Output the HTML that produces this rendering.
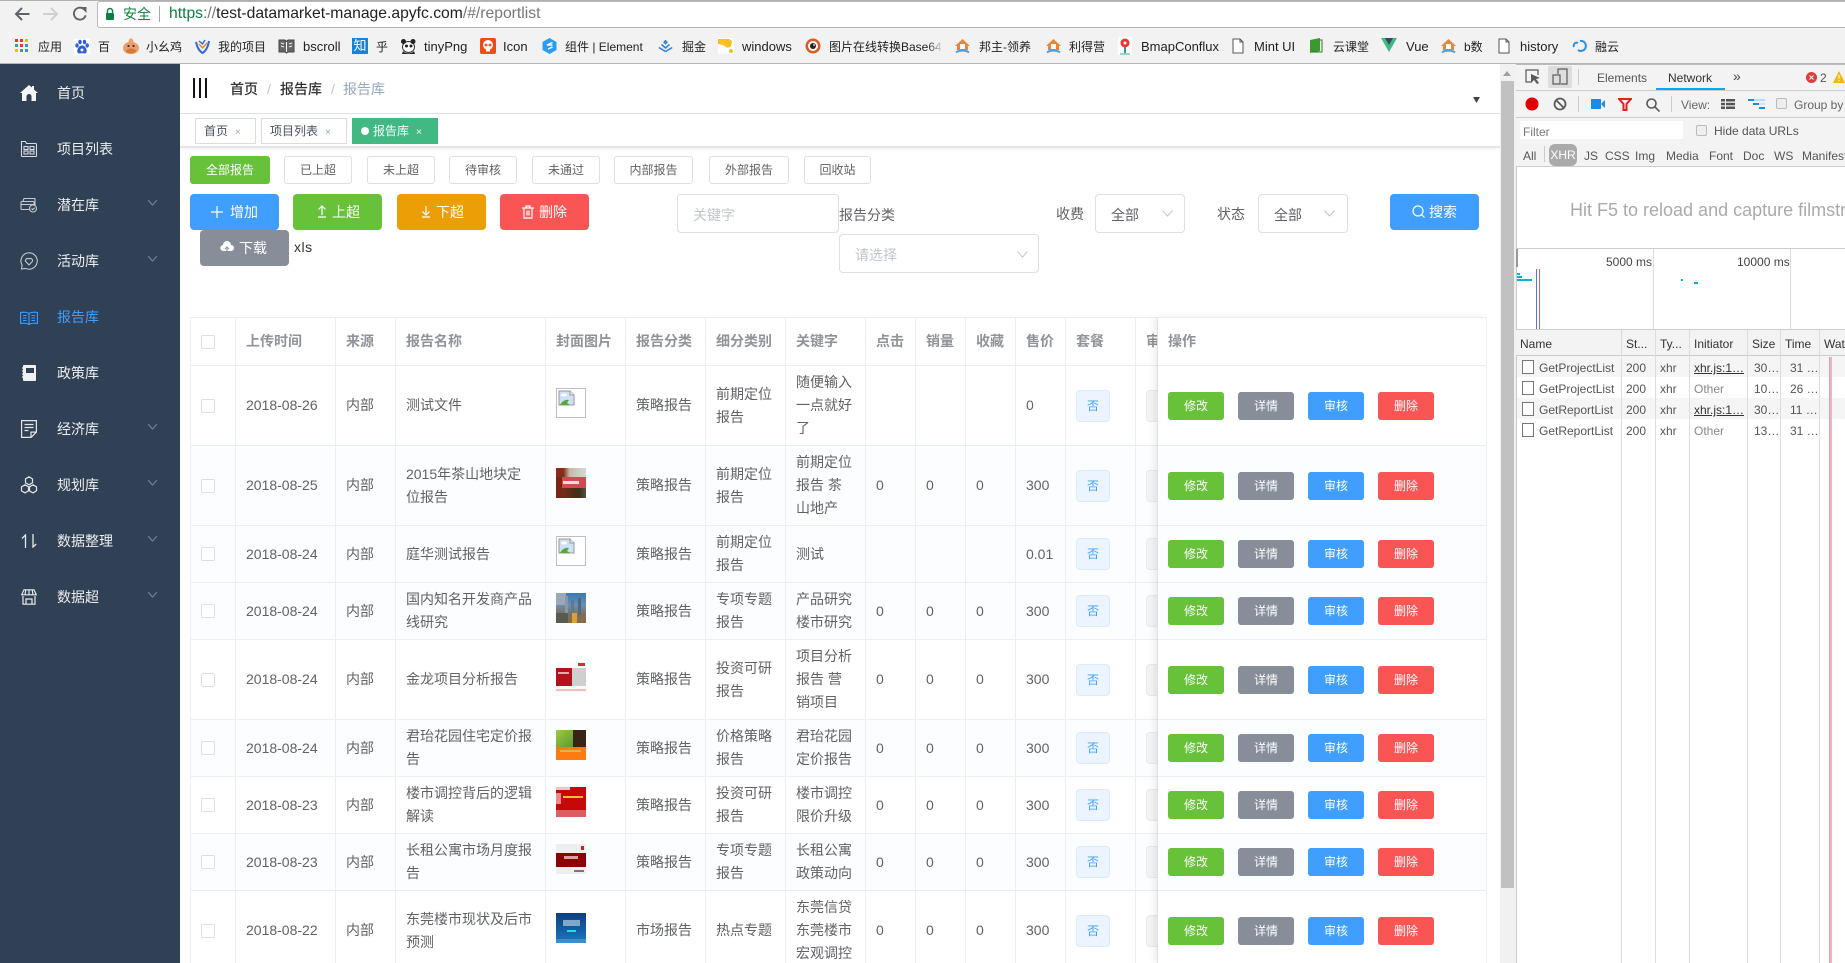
<!DOCTYPE html>
<html><head><meta charset="utf-8"><title>报告库</title>
<style>
*{box-sizing:border-box}
html,body{margin:0;padding:0;width:1845px;height:963px;overflow:hidden;background:#fff;font-family:"Liberation Sans","Noto Sans CJK SC",sans-serif;font-size:14px;color:#606266}
.a{position:absolute;white-space:nowrap}
svg{position:absolute;display:block}
/* chrome */
#top{left:0;top:0;width:1845px;height:64px;background:#f2f2f2;border-top:1px solid #b0b0b0;border-bottom:1px solid #b5b5b5}
.bm{position:absolute;top:39px;line-height:16px;font-size:12px;color:#222;white-space:nowrap}
.bm.lt{font-size:13px}
/* side */
#side{left:0;top:64px;width:180px;height:899px;background:#304055}
.mi{position:absolute;left:57px;font-size:14px;line-height:20px;color:#eceef0;white-space:nowrap}
.ar{position:absolute;left:148px;width:9px;height:9px}
/* tabs */
.tag{position:absolute;top:118px;height:26px;border:1px solid #d8dce5;background:#fff;font-size:12px;line-height:24px;padding-left:8px;color:#495060;white-space:nowrap}
.tag i{font-style:normal;color:#9aa;font-size:10px;margin-left:7px}
.fb{position:absolute;top:156px;height:28px;border:1px solid #dcdfe6;border-radius:3px;background:#fff;font-size:12px;line-height:26px;text-align:center;color:#606266;white-space:nowrap}
.btn{position:absolute;height:36px;border-radius:4px;color:#fff;font-size:14px;line-height:37px;text-align:center;white-space:nowrap}
.inp{position:absolute;border:1px solid #dcdfe6;border-radius:4px;background:#fff;font-size:14px;height:39px;line-height:40px;padding-left:15px;white-space:nowrap}
/* table */
#tw{left:190px;top:317px;width:968px;height:646px;overflow:hidden}
#opw{left:1158px;top:317px;width:329px;height:646px;overflow:hidden;background:#fff;box-shadow:-4px 0 7px rgba(0,0,0,.07)}
table{border-collapse:separate;border-spacing:0;table-layout:fixed;font-size:14px}
td,th{border-right:1px solid #ebeef5;border-bottom:1px solid #ebeef5;padding:0 10px;line-height:23px;vertical-align:middle;text-align:left;white-space:nowrap;overflow:hidden;font-weight:normal}
#t{border-left:1px solid #ebeef5;border-top:1px solid #ebeef5}
#op{border-top:1px solid #ebeef5}
th{color:#909399;font-weight:bold;font-size:14px}
tr.h{height:48px}tr.s{background:#fcfdfe}
.r8{height:80px}.r5{height:57px}
.cb{display:block;width:14px;height:14px;border:1px solid #dcdfe6;border-radius:2px;background:#fff}
.no{display:block;width:34px;height:32px;background:#ecf5ff;border:1px solid #d9ecff;border-radius:4px;color:#409eff;font-size:12px;line-height:30px;text-align:center}
.ng{display:block;width:34px;height:32px;background:#f4f4f5;border:1px solid #e9e9eb;border-radius:4px}
.cv{display:block;position:relative;top:-3px;width:30px;height:30px;overflow:hidden}
.cv b{position:absolute;display:block}
.br{border:1px solid #c0c0c0;background:#fff}
.o{display:inline-block;width:56px;height:28px;line-height:28px;border-radius:3px;color:#fff;font-size:12px;text-align:center;margin-right:14px;vertical-align:middle}
.gr{background:#67c23a}.gy{background:#878d99}.bl{background:#409eff}.rd{background:#fa5555}
/* devtools */
#dv{left:1516px;top:64px;width:329px;height:899px;background:#fff;border-left:1px solid #ccc;font-size:12px;color:#555}
.d{position:absolute;white-space:nowrap;font-size:12px;line-height:14px;color:#555}
.l{position:absolute;background:#ccc}
</style></head><body>

<!-- browser chrome -->
<div class="a" id="top"></div>
<div class="a" style="left:97px;top:1px;width:1748px;height:27px;background:#fff;border:1px solid #b8b8b8;border-right:0;border-radius:3px 0 0 3px"></div>
<svg style="left:12px;top:5px" width="80" height="18" viewBox="0 0 80 18" fill="none">
<path d="M17.500 9H4.500M10 3L4 9l6 6" stroke="#5f6368" stroke-width="2"/>
<path d="M31 9h13M39 3l6 6-6 6" stroke="#cfcfcf" stroke-width="2"/>
<path d="M71.500 3.800a6 6 0 1 0 2.200 6.500" stroke="#5f6368" stroke-width="1.900"/><path d="M68.500 2h6v6z" fill="#5f6368"/>
</svg>
<svg style="left:104px;top:7px" width="12" height="14" viewBox="0 0 12 14"><path d="M3.500 6V4a2.500 2.500 0 0 1 5 0v2" fill="none" stroke="#0b8043" stroke-width="1.400"/><rect x="2" y="6" width="8" height="7" rx="1" fill="#0b8043"/></svg>
<div class="a" style="left:123px;top:5px;font-size:14px;line-height:18px;color:#0b8043">安全</div>
<div class="a" style="left:159px;top:6px;width:1px;height:16px;background:#aaa"></div>
<div class="a" style="left:169px;top:5px;font-size:15.7px;line-height:18px;color:#555"><span style="color:#0b8043">https</span><span style="color:#777">://</span><span style="color:#222">test-datamarket-manage.apyfc.com</span><span style="color:#777">/#/reportlist</span></div>

<!-- bookmarks -->
<svg style="left:15px;top:39px" width="14" height="14" viewBox="0 0 14 14"><rect x="0" y="0" width="3" height="3" fill="#e33"/><rect x="5" y="0" width="3" height="3" fill="#e33"/><rect x="10" y="0" width="3" height="3" fill="#fb0"/><rect x="0" y="5" width="3" height="3" fill="#3a7"/><rect x="5" y="5" width="3" height="3" fill="#e33"/><rect x="10" y="5" width="3" height="3" fill="#48e"/><rect x="0" y="10" width="3" height="3" fill="#fb0"/><rect x="5" y="10" width="3" height="3" fill="#3a7"/><rect x="10" y="10" width="3" height="3" fill="#48e"/></svg>
<span class="bm" style="left:38px">应用</span>
<svg style="left:74px;top:39px" width="16" height="16" viewBox="0 0 16 16"><rect width="16" height="16" fill="#fff"/><g fill="#2a5fd8"><ellipse cx="3" cy="6.500" rx="1.700" ry="2.100"/><ellipse cx="6" cy="3" rx="1.700" ry="2.200"/><ellipse cx="10.500" cy="3" rx="1.700" ry="2.200"/><ellipse cx="13.200" cy="6.500" rx="1.700" ry="2.100"/><path d="M8 6.500c-3 0-5.500 4-4.500 7 1 1.600 3.500.8 4.500.8s3.500.8 4.500-.8c1-3-1.500-7-4.500-7z"/></g><circle cx="8" cy="11" r="1.500" fill="#fff"/></svg>
<span class="bm" style="left:98px">百</span>
<svg style="left:122px;top:38px" width="18" height="17" viewBox="0 0 18 17"><path d="M9 0c1.500 1 2.500 2 2.500 4 3 1 5.500 3 5.500 6 0 4-3.500 6-8 6s-8-2-8-6c0-3 2.500-5 5.500-6C6.500 2 7.500 1 9 0z" fill="#e8a070"/><ellipse cx="9" cy="13" rx="5" ry="2.500" fill="#d87838"/><circle cx="6.500" cy="8" r="1.100" fill="#432"/><circle cx="11.500" cy="8" r="1.100" fill="#432"/></svg>
<span class="bm" style="left:146px">小幺鸡</span>
<svg style="left:195px;top:39px" width="15" height="15" viewBox="0 0 15 15" fill="none"><path d="M1 3c1 5 3 9 6.500 11C11 12 13 8 14 2" stroke="#2a6bd8" stroke-width="2"/><path d="M4 5l3.500 4L12 4" stroke="#e8862a" stroke-width="1.400"/><path d="M4 2l3.500 3L10 1" stroke="#2a6bd8" stroke-width="1.400"/></svg>
<span class="bm" style="left:218px">我的项目</span>
<svg style="left:278px;top:39px" width="17" height="15" viewBox="0 0 17 15"><path d="M1 1h6l1.500 1.500L10 1h6v12h-6l-1.500 1L7 13H1z" fill="#666" stroke="#444"/><path d="M8.500 3v10" stroke="#fff"/><path d="M3 4l3 1M3 7l3 1M14 4l-3 1M14 7l-3 1" stroke="#eee"/></svg>
<span class="bm lt" style="left:303px">bscroll</span>
<div class="a" style="left:352px;top:38px;width:16px;height:16px;background:#0f84e4;color:#fff;font-size:13px;line-height:16px;text-align:center">知</div>
<span class="bm" style="left:376px">乎</span>
<svg style="left:400px;top:38px" width="17" height="16" viewBox="0 0 17 16"><ellipse cx="8.500" cy="9" rx="6" ry="5.500" fill="#fff" stroke="#333"/><circle cx="3.500" cy="3.500" r="2.500" fill="#222"/><circle cx="13" cy="3.500" r="2.500" fill="#222"/><circle cx="6.500" cy="8" r="1.500" fill="#222"/><circle cx="11" cy="8" r="1.500" fill="#222"/><path d="M3 13c2 3 9 3 11 0l1 3H2z" fill="#222"/></svg>
<span class="bm lt" style="left:424px">tinyPng</span>
<div class="a" style="left:480px;top:38px;width:16px;height:16px;background:#f04a1c;border-radius:2px"><svg style="left:2px;top:2px" width="12" height="12" viewBox="0 0 12 12"><circle cx="6" cy="5" r="5" fill="#fff"/><rect x="4" y="8" width="4" height="3.500" fill="#fff"/><circle cx="4" cy="5" r="1.400" fill="#f04a1c"/><circle cx="8" cy="5" r="1.400" fill="#f04a1c"/></svg></div>
<span class="bm lt" style="left:503px">Icon</span>
<svg style="left:542px;top:38px" width="15" height="16" viewBox="0 0 15 16"><path d="M7.500 0l7 4v8l-7 4-7-4V4z" fill="#2d9cf0"/><path d="M10.500 4.500L5 7l5.500 0M10.500 9L6 11" stroke="#fff" stroke-width="1.500" fill="none"/></svg>
<span class="bm" style="left:565px">组件 | Element</span>
<svg style="left:658px;top:40px" width="15" height="12" viewBox="0 0 15 12" fill="none" stroke="#2a80e0" stroke-width="1.500"><path d="M7.500 0.800l1.400 1.400-1.400 1.400-1.400-1.400zM3.500 4.500L7.500 8l4-3.500M.8 7.500l6.700 4 6.700-4"/></svg>
<span class="bm" style="left:682px">掘金</span>
<svg style="left:718px;top:38px" width="16" height="16" viewBox="0 0 16 16"><rect width="16" height="16" fill="#fff"/><path d="M0 1h11l3 2-1 5c-1 2-4 2-5 1L5 7 0 6z" fill="#f8bf1e"/><circle cx="13" cy="13" r="2" fill="#f8bf1e"/></svg>
<span class="bm lt" style="left:742px">windows</span>
<svg style="left:805px;top:38px" width="16" height="16" viewBox="0 0 16 16"><circle cx="8" cy="8" r="7.500" fill="#e05a20"/><circle cx="8" cy="8" r="5" fill="#fff"/><circle cx="8" cy="8" r="3" fill="#222"/><circle cx="9" cy="7" r=".9" fill="#fff"/></svg>
<span class="bm" style="left:829px;width:112px;overflow:hidden;-webkit-mask-image:linear-gradient(90deg,#000 88%,rgba(0,0,0,.15) 100%);mask-image:linear-gradient(90deg,#000 88%,rgba(0,0,0,.15) 100%)">图片在线转换Base64</span>
<svg style="left:954px;top:38px" width="17" height="16" viewBox="0 0 17 16"><path d="M8.500 1L16 8h-2v4H3V8H1z" fill="#e8863a"/><rect x="6" y="6" width="5" height="5" fill="#fff"/><path d="M2 14.500C5 12 12 12 15 14.500" stroke="#4aa0e0" stroke-width="2" fill="none"/></svg>
<span class="bm" style="left:979px">邦主-领养</span>
<svg style="left:1045px;top:38px" width="17" height="16" viewBox="0 0 17 16"><path d="M8.500 1L16 8h-2v4H3V8H1z" fill="#e8863a"/><rect x="6" y="6" width="5" height="5" fill="#fff"/><path d="M2 14.500C5 12 12 12 15 14.500" stroke="#4aa0e0" stroke-width="2" fill="none"/></svg>
<span class="bm" style="left:1069px">利得营</span>
<svg style="left:1118px;top:37px" width="14" height="18" viewBox="0 0 14 18"><rect width="14" height="18" fill="#fff"/><circle cx="7" cy="6" r="4.500" fill="#e33"/><circle cx="7" cy="6" r="1.500" fill="#fff"/><path d="M7 10v6" stroke="#48a" stroke-width="2"/><path d="M2 17h10" stroke="#3a7" stroke-width="1"/></svg>
<span class="bm lt" style="left:1141px">BmapConflux</span>
<svg style="left:1232px;top:38px" width="12" height="16" viewBox="0 0 12 16"><path d="M1 1h7l3 3v11H1z" fill="#fff" stroke="#555"/><path d="M8 1v3h3" fill="none" stroke="#555"/></svg>
<span class="bm lt" style="left:1254px">Mint UI</span>
<svg style="left:1309px;top:37px" width="14" height="17" viewBox="0 0 14 17"><path d="M1 3l10-2v13L1 16z" fill="#3a9a30"/><path d="M11 3h2v12H3" fill="none" stroke="#2a7a20"/></svg>
<span class="bm" style="left:1333px">云课堂</span>
<svg style="left:1381px;top:38px" width="16" height="14" viewBox="0 0 16 14"><path d="M0 0h16L8 14z" fill="#41b883"/><path d="M4 0h8L8 7z" fill="#35495e"/></svg>
<span class="bm lt" style="left:1406px">Vue</span>
<svg style="left:1440px;top:38px" width="17" height="16" viewBox="0 0 17 16"><path d="M8.500 1L16 8h-2v4H3V8H1z" fill="#e8863a"/><rect x="6" y="6" width="5" height="5" fill="#fff"/><path d="M2 14.500C5 12 12 12 15 14.500" stroke="#4aa0e0" stroke-width="2" fill="none"/></svg>
<span class="bm" style="left:1464px">b数</span>
<svg style="left:1498px;top:38px" width="12" height="16" viewBox="0 0 12 16"><path d="M1 1h7l3 3v11H1z" fill="#fff" stroke="#555"/><path d="M8 1v3h3" fill="none" stroke="#555"/></svg>
<span class="bm lt" style="left:1520px">history</span>
<svg style="left:1572px;top:39px" width="16" height="14" viewBox="0 0 16 14" fill="none"><path d="M8 2a5 5 0 1 1-2 9" stroke="#2a90e0" stroke-width="2"/><path d="M6 4a3 3 0 0 0-4 4" stroke="#2a90e0" stroke-width="2"/></svg>
<span class="bm" style="left:1595px">融云</span>

<!-- sidebar -->
<div class="a" id="side"></div>
<svg style="left:20px;top:85px" width="18" height="16" viewBox="0 0 18 16"><path d="M9 0L0 8h2v8h14V8h2L14 4.500V1h-2v1.500z" fill="#f4f5f6"/><path d="M6.500 16v-4.500a2.500 2.500 0 0 1 5 0V16z" fill="#304055"/></svg>
<svg style="left:20px;top:140px" width="18" height="18" viewBox="0 0 18 18" fill="none" stroke="#d8dbe0" stroke-width="1.100"><path d="M1.500 3.500V1.500h4l1 2h9a1 1 0 0 1 1 1v11a1 1 0 0 1-1 1h-13a1 1 0 0 1-1-1z"/><rect x="4" y="6.500" width="4" height="3"/><rect x="10" y="6.500" width="4" height="3"/><rect x="4" y="11" width="4" height="3"/><rect x="10" y="11" width="4" height="3"/></svg>
<svg style="left:20px;top:197px" width="18" height="16" viewBox="0 0 18 16" fill="none" stroke="#c4c9d0" stroke-width="1.100"><path d="M3 4l1-2.500h11V9"/><rect x="1" y="4.500" width="13" height="8" rx="1"/><path d="M1 7.500h13"/><circle cx="13" cy="11.500" r="3.500" fill="#304055"/><path d="M11.500 11.500l1.200 1.200 2-2"/></svg>
<svg style="left:20px;top:252px" width="18" height="18" viewBox="0 0 18 18" fill="none" stroke="#c4c9d0" stroke-width="1.100"><path d="M9 .8a8.200 8.200 0 1 1 -3.500 15.600L1.500 17l.6-3.800A8.200 8.200 0 0 1 9 .8z"/><path d="M9 13L5.500 9.200A2.300 2.300 0 0 1 9 6.800a2.300 2.300 0 0 1 3.500 2.400z"/></svg>
<svg style="left:20px;top:311px" width="18" height="14" viewBox="0 0 18 14" fill="none" stroke="#409eff" stroke-width="1.100"><path d="M9 2.500C7 1 3 1 .6 1.500v11C3 12 7 12 9 13.500 11 12 15 12 17.400 12.500v-11C15 1 11 1 9 2.500zM9 2.500v11"/><path d="M3 4.500h3.500M3 7h3.500M3 9.500h3.500M11.500 4.500H15M11.500 7H15M11.500 9.500H15"/></svg>
<svg style="left:21px;top:365px" width="16" height="17" viewBox="0 0 16 17"><rect x="2" y="0" width="13" height="16" rx="1" fill="#f0f1f3"/><rect x="5" y="3" width="8" height="5" fill="#304055"/><path d="M1 3h3M1 6h3M1 9h3M1 12h3" stroke="#f0f1f3" stroke-width="1.300"/></svg>
<svg style="left:21px;top:420px" width="16" height="18" viewBox="0 0 16 18" fill="none" stroke="#e4e6e9" stroke-width="1.200"><path d="M.6.6h14.800v11.500l-5.300 5.300H.6z"/><path d="M10 17.400v-5.300h5.400M3.500 4.500h9M3.500 7.500h9M3.500 10.500h4"/></svg>
<svg style="left:20px;top:476px" width="18" height="18" viewBox="0 0 18 18" fill="none" stroke="#e4e6e9" stroke-width="1.200"><path d="M9 .8l3.500 2v4L9 8.800l-3.500-2v-4zM5 8.800l3.500 2v4L5 16.900l-3.500-2v-4zM13 8.800l3.500 2v4L13 16.900l-3.500-2v-4z"/></svg>
<svg style="left:21px;top:534px" width="16" height="14" viewBox="0 0 16 14" fill="none" stroke="#e6e8ea" stroke-width="1.300"><path d="M4.500 14V1L1 4.500M12 0v13l3.200-3"/></svg>
<svg style="left:21px;top:589px" width="16" height="16" viewBox="0 0 16 16" fill="none" stroke="#e8eaec" stroke-width="1.200"><path d="M3 .8h10l2.300 5H.7zM.7 5.800h14.600M4 5.800l.8-5M8 5.800V.8M12 5.800l-.8-5M2 7v8.200h12V7M5 15V10h6v5"/></svg>

<span class="mi" style="top:83px">首页</span>
<span class="mi" style="top:139px">项目列表</span>
<span class="mi" style="top:195px">潜在库</span>
<span class="mi" style="top:251px">活动库</span>
<span class="mi" style="top:307px;color:#409eff">报告库</span>
<span class="mi" style="top:363px">政策库</span>
<span class="mi" style="top:419px">经济库</span>
<span class="mi" style="top:475px">规划库</span>
<span class="mi" style="top:531px">数据整理</span>
<span class="mi" style="top:587px">数据超</span>
<svg class="ar" style="top:198px" viewBox="0 0 9 9"><path d="M0 2l4.500 5L9 2" fill="none" stroke="#7b8797"/></svg>
<svg class="ar" style="top:254px" viewBox="0 0 9 9"><path d="M0 2l4.500 5L9 2" fill="none" stroke="#7b8797"/></svg>
<svg class="ar" style="top:422px" viewBox="0 0 9 9"><path d="M0 2l4.500 5L9 2" fill="none" stroke="#7b8797"/></svg>
<svg class="ar" style="top:478px" viewBox="0 0 9 9"><path d="M0 2l4.500 5L9 2" fill="none" stroke="#7b8797"/></svg>
<svg class="ar" style="top:534px" viewBox="0 0 9 9"><path d="M0 2l4.500 5L9 2" fill="none" stroke="#7b8797"/></svg>
<svg class="ar" style="top:590px" viewBox="0 0 9 9"><path d="M0 2l4.500 5L9 2" fill="none" stroke="#7b8797"/></svg>

<!-- header -->
<svg style="left:193px;top:78px" width="15" height="20" viewBox="0 0 15 20"><path d="M1 0v20M7 0v20M13 0v20" stroke="#111" stroke-width="2"/></svg>
<div class="a" style="left:230px;top:79px;line-height:20px;font-size:14px;color:#303133;font-weight:500">首页</div>
<div class="a" style="left:267px;top:79px;line-height:20px;color:#c0c4cc">/</div>
<div class="a" style="left:280px;top:79px;line-height:20px;font-size:14px;color:#303133;font-weight:500">报告库</div>
<div class="a" style="left:331px;top:79px;line-height:20px;color:#c0c4cc">/</div>
<div class="a" style="left:343px;top:79px;line-height:20px;color:#97a8be">报告库</div>
<svg style="left:1473px;top:97px" width="7" height="6" viewBox="0 0 7 6"><path d="M0 0h7L3.500 6z" fill="#444"/></svg>
<div class="a" style="left:180px;top:113px;width:1320px;height:1px;background:#dfe1e6"></div>
<div class="a" style="left:180px;top:146px;width:1320px;height:2px;background:#e4e5e8;box-shadow:0 1px 3px rgba(0,0,0,.08)"></div>

<div class="tag" style="left:195px;width:61px">首页<i>×</i></div>
<div class="tag" style="left:261px;width:86px">项目列表<i>×</i></div>
<div class="tag" style="left:352px;width:86px;background:#42b983;border-color:#42b983;color:#fff"><span style="display:inline-block;width:8px;height:8px;border-radius:50%;background:#fff;margin-right:4px"></span>报告库<i style="color:#fff">×</i></div>

<div class="fb" style="left:190px;width:80px;background:#67c23a;border-color:#67c23a;color:#fff">全部报告</div>
<div class="fb" style="left:284px;width:68px">已上超</div>
<div class="fb" style="left:367px;width:68px">未上超</div>
<div class="fb" style="left:449px;width:68px">待审核</div>
<div class="fb" style="left:532px;width:68px">未通过</div>
<div class="fb" style="left:614px;width:79px">内部报告</div>
<div class="fb" style="left:709px;width:80px">外部报告</div>
<div class="fb" style="left:804px;width:67px">回收站</div>

<div class="btn" style="left:190px;top:194px;width:89px;background:#409eff"><svg style="left:21px;top:12px" width="12" height="12" viewBox="0 0 12 12"><path d="M6 0v12M0 6h12" stroke="#fff" stroke-width="1.200"/></svg><span style="padding-left:19px">增加</span></div>
<div class="btn" style="left:293px;top:194px;width:89px;background:#67c23a"><svg style="left:24px;top:11px" width="10" height="13" viewBox="0 0 10 13" fill="none" stroke="#fff" stroke-width="1.200"><path d="M5 10V1M1.500 4.500L5 1l3.500 3.500M1 12h8"/></svg><span style="padding-left:17px">上超</span></div>
<div class="btn" style="left:397px;top:194px;width:89px;background:#eb9e05"><svg style="left:24px;top:11px" width="10" height="13" viewBox="0 0 10 13" fill="none" stroke="#fff" stroke-width="1.200"><path d="M5 1v9M1.500 6.500L5 10l3.500-3.500M1 12h8"/></svg><span style="padding-left:17px">下超</span></div>
<div class="btn" style="left:500px;top:194px;width:89px;background:#fa5555"><svg style="left:22px;top:11px" width="12" height="14" viewBox="0 0 12 14" fill="none" stroke="#fff" stroke-width="1.200"><path d="M0 3h12M4 3V1h4v2M2 3v10h8V3M5 5.500v5M7 5.500v5"/></svg><span style="padding-left:17px">删除</span></div>
<div class="btn" style="left:200px;top:230px;width:89px;height:36px;background:#878d99"><svg style="left:20px;top:11px" width="14" height="13" viewBox="0 0 14 13"><path d="M3.500 10a3 3 0 0 1-.5-6 4 4 0 0 1 8 0 3 3 0 0 1 0 6z" fill="#fff"/><path d="M7 12V6M5 8l2-2 2 2" stroke="#878d99" fill="none"/></svg><span style="padding-left:17px">下载</span></div>
<div class="a" style="left:294px;top:237px;font-size:14px;line-height:20px;color:#333;letter-spacing:.5px">xls</div>

<div class="inp" style="left:677px;top:194px;width:162px;color:#c0c4cc">关键字</div>
<div class="a" style="left:839px;top:205px;line-height:20px;font-size:14px;color:#606266">报告分类</div>
<div class="inp" style="left:839px;top:234px;width:200px;color:#c0c4cc">请选择</div>
<svg style="left:1017px;top:251px" width="11" height="7" viewBox="0 0 11 7"><path d="M.5.500l5 5.500 5-5.500" fill="none" stroke="#c0c4cc"/></svg>
<div class="a" style="left:1056px;top:204px;line-height:20px;color:#606266">收费</div>
<div class="inp" style="left:1095px;top:194px;width:90px;color:#606266">全部</div>
<svg style="left:1162px;top:210px" width="11" height="7" viewBox="0 0 11 7"><path d="M.5.500l5 5.500 5-5.500" fill="none" stroke="#c0c4cc"/></svg>
<div class="a" style="left:1217px;top:204px;line-height:20px;color:#606266">状态</div>
<div class="inp" style="left:1258px;top:194px;width:90px;color:#606266">全部</div>
<svg style="left:1324px;top:210px" width="11" height="7" viewBox="0 0 11 7"><path d="M.5.500l5 5.500 5-5.500" fill="none" stroke="#c0c4cc"/></svg>
<div class="btn" style="left:1390px;top:194px;width:89px;background:#409eff"><svg style="left:22px;top:11px" width="13" height="14" viewBox="0 0 13 14" fill="none" stroke="#fff" stroke-width="1.200"><circle cx="6" cy="6" r="5"/><path d="M9.500 9.500l3 3"/></svg><span style="padding-left:17px">搜索</span></div>

<!-- table -->
<div class="a" id="tw">
<table id="t" style="width:968px">
<colgroup><col style="width:45px"><col style="width:100px"><col style="width:60px"><col style="width:150px"><col style="width:80px"><col style="width:80px"><col style="width:80px"><col style="width:80px"><col style="width:50px"><col style="width:50px"><col style="width:50px"><col style="width:50px"><col style="width:70px"><col style="width:22px"></colgroup>
<tr class="h"><th><span class="cb"></span></th><th>上传时间</th><th>来源</th><th>报告名称</th><th>封面图片</th><th>报告分类</th><th>细分类别</th><th>关键字</th><th>点击</th><th>销量</th><th>收藏</th><th>售价</th><th>套餐</th><th>审核</th></tr>
<tr class="r8"><td><span class="cb"></span></td><td>2018-08-26</td><td>内部</td><td>测试文件</td><td><span class="cv br"><svg style="left:1px;top:1px" width="17" height="16" viewBox="0 0 17 16"><path d="M1 1h11l4 4v10H1z" fill="#cfe0f8" stroke="#999"/><path d="M12 1v4h4" fill="#eee" stroke="#999"/><ellipse cx="6" cy="5" rx="3" ry="1.500" fill="#fff"/><path d="M2 15c2-4 6-6 9-5l-2 3 3 2z" fill="#55a83a"/></svg></span></td><td>策略报告</td><td>前期定位<br>报告</td><td>随便输入<br>一点就好<br>了</td><td></td><td></td><td></td><td>0</td><td><span class="no">否</span></td><td><span class="ng"></span></td></tr>
<tr class="r8 s"><td><span class="cb"></span></td><td>2018-08-25</td><td>内部</td><td>2015年茶山地块定<br>位报告</td><td><span class="cv" style="background:#8a3a20"><b style="left:0;top:0;width:30px;height:9px;background:linear-gradient(90deg,#8a2a18 0,#8a2a18 25%,#c8b8a8 45%,#d8d8d8 100%)"></b><b style="left:6px;top:9px;width:24px;height:11px;background:#d04a50"></b><b style="left:7px;top:13px;width:16px;height:3px;background:#f3dcdc"></b><b style="left:0;top:9px;width:6px;height:21px;background:#7a2414"></b><b style="left:6px;top:20px;width:24px;height:10px;background:linear-gradient(90deg,#7a2a18,#3a3018 70%,#55503a)"></b></span></td><td>策略报告</td><td>前期定位<br>报告</td><td>前期定位<br>报告 茶<br>山地产</td><td>0</td><td>0</td><td>0</td><td>300</td><td><span class="no">否</span></td><td><span class="ng"></span></td></tr>
<tr class="r5 s"><td><span class="cb"></span></td><td>2018-08-24</td><td>内部</td><td>庭华测试报告</td><td><span class="cv br"><svg style="left:1px;top:1px" width="17" height="16" viewBox="0 0 17 16"><path d="M1 1h11l4 4v10H1z" fill="#cfe0f8" stroke="#999"/><path d="M12 1v4h4" fill="#eee" stroke="#999"/><ellipse cx="6" cy="5" rx="3" ry="1.500" fill="#fff"/><path d="M2 15c2-4 6-6 9-5l-2 3 3 2z" fill="#55a83a"/></svg></span></td><td>策略报告</td><td>前期定位<br>报告</td><td>测试</td><td></td><td></td><td></td><td>0.01</td><td><span class="no">否</span></td><td><span class="ng"></span></td></tr>
<tr class="r5 s"><td><span class="cb"></span></td><td>2018-08-24</td><td>内部</td><td>国内知名开发商产品<br>线研究</td><td><span class="cv" style="background:linear-gradient(180deg,#3a78b0 0,#6a90b0 40%,#7a7060 70%,#8a6a40 100%)"><b style="left:0;top:0;width:10px;height:12px;background:#9aa8b8"></b><b style="left:9px;top:3px;width:3px;height:22px;background:#8898a8"></b><b style="left:15px;top:7px;width:3px;height:17px;background:#5a7a98"></b><b style="left:22px;top:5px;width:3px;height:17px;background:#4a6a88"></b><b style="left:16px;top:20px;width:5px;height:10px;background:#e0a030"></b><b style="left:0;top:20px;width:12px;height:10px;background:#5a5a50"></b></span></td><td>策略报告</td><td>专项专题<br>报告</td><td>产品研究<br>楼市研究</td><td>0</td><td>0</td><td>0</td><td>300</td><td><span class="no">否</span></td><td><span class="ng"></span></td></tr>
<tr class="r8"><td><span class="cb"></span></td><td>2018-08-24</td><td>内部</td><td>金龙项目分析报告</td><td><span class="cv" style="background:#fafafa"><b style="left:0;top:6px;width:16px;height:18px;background:#b5101c"></b><b style="left:16px;top:6px;width:14px;height:18px;background:#cfcfcf"></b><b style="left:22px;top:1px;width:7px;height:3px;background:#c33"></b><b style="left:0;top:27px;width:30px;height:2px;background:#f6bcbc"></b><b style="left:2px;top:10px;width:11px;height:2px;background:#e8a8a8"></b></span></td><td>策略报告</td><td>投资可研<br>报告</td><td>项目分析<br>报告 营<br>销项目</td><td>0</td><td>0</td><td>0</td><td>300</td><td><span class="no">否</span></td><td><span class="ng"></span></td></tr>
<tr class="r5 s"><td><span class="cb"></span></td><td>2018-08-24</td><td>内部</td><td>君珆花园住宅定价报<br>告</td><td><span class="cv" style="background:#ff7a10"><b style="left:0;top:0;width:17px;height:17px;background:linear-gradient(135deg,#a0c848,#5a9a30)"></b><b style="left:17px;top:0;width:13px;height:17px;background:#3a2418"></b><b style="left:4px;top:20px;width:21px;height:2px;background:#f0b040"></b></span></td><td>策略报告</td><td>价格策略<br>报告</td><td>君珆花园<br>定价报告</td><td>0</td><td>0</td><td>0</td><td>300</td><td><span class="no">否</span></td><td><span class="ng"></span></td></tr>
<tr class="r5"><td><span class="cb"></span></td><td>2018-08-23</td><td>内部</td><td>楼市调控背后的逻辑<br>解读</td><td><span class="cv" style="background:#c80808"><b style="left:0;top:0;width:14px;height:3px;background:#e8c8c8"></b><b style="left:0;top:6px;width:5px;height:11px;background:#e88a8a"></b><b style="left:7px;top:9px;width:20px;height:2px;background:#ecc030"></b><b style="left:0;top:23px;width:30px;height:7px;background:#d86060"></b></span></td><td>策略报告</td><td>投资可研<br>报告</td><td>楼市调控<br>限价升级</td><td>0</td><td>0</td><td>0</td><td>300</td><td><span class="no">否</span></td><td><span class="ng"></span></td></tr>
<tr class="r5 s"><td><span class="cb"></span></td><td>2018-08-23</td><td>内部</td><td>长租公寓市场月度报<br>告</td><td><span class="cv" style="background:#eee"><b style="left:0;top:9px;width:30px;height:14px;background:#8c0505"></b><b style="left:25px;top:2px;width:3px;height:4px;background:#c22"></b><b style="left:8px;top:12px;width:14px;height:3px;background:#d8a0a0"></b><b style="left:18px;top:26px;width:10px;height:2px;background:#777"></b></span></td><td>策略报告</td><td>专项专题<br>报告</td><td>长租公寓<br>政策动向</td><td>0</td><td>0</td><td>0</td><td>300</td><td><span class="no">否</span></td><td><span class="ng"></span></td></tr>
<tr class="r8"><td><span class="cb"></span></td><td>2018-08-22</td><td>内部</td><td>东莞楼市现状及后市<br>预测</td><td><span class="cv" style="background:linear-gradient(180deg,#0d3f80,#1a78c0)"><b style="left:7px;top:7px;width:17px;height:6px;background:#7fa8c8"></b><b style="left:11px;top:17px;width:9px;height:2px;background:#2dd"></b><b style="left:0;top:26px;width:30px;height:4px;background:#3a8ed0"></b></span></td><td>市场报告</td><td>热点专题</td><td>东莞信贷<br>东莞楼市<br>宏观调控</td><td>0</td><td>0</td><td>0</td><td>300</td><td><span class="no">否</span></td><td><span class="ng"></span></td></tr>
</table>
</div>

<div class="a" id="opw">
<table id="op" style="width:329px">
<tr class="h"><th>操作</th></tr>
<tr class="r8"><td><span class="o gr">修改</span><span class="o gy">详情</span><span class="o bl">审核</span><span class="o rd">删除</span></td></tr>
<tr class="r8 s"><td><span class="o gr">修改</span><span class="o gy">详情</span><span class="o bl">审核</span><span class="o rd">删除</span></td></tr>
<tr class="r5 s"><td><span class="o gr">修改</span><span class="o gy">详情</span><span class="o bl">审核</span><span class="o rd">删除</span></td></tr>
<tr class="r5 s"><td><span class="o gr">修改</span><span class="o gy">详情</span><span class="o bl">审核</span><span class="o rd">删除</span></td></tr>
<tr class="r8"><td><span class="o gr">修改</span><span class="o gy">详情</span><span class="o bl">审核</span><span class="o rd">删除</span></td></tr>
<tr class="r5 s"><td><span class="o gr">修改</span><span class="o gy">详情</span><span class="o bl">审核</span><span class="o rd">删除</span></td></tr>
<tr class="r5"><td><span class="o gr">修改</span><span class="o gy">详情</span><span class="o bl">审核</span><span class="o rd">删除</span></td></tr>
<tr class="r5 s"><td><span class="o gr">修改</span><span class="o gy">详情</span><span class="o bl">审核</span><span class="o rd">删除</span></td></tr>
<tr class="r8"><td><span class="o gr">修改</span><span class="o gy">详情</span><span class="o bl">审核</span><span class="o rd">删除</span></td></tr>
</table>
</div>

<!-- page scrollbar -->
<div class="a" style="left:1500px;top:64px;width:16px;height:899px;background:#f1f1f1"></div>
<div class="a" style="left:1501px;top:81px;width:13px;height:807px;background:#c1c1c1"></div>
<svg style="left:1503px;top:71px" width="8" height="5" viewBox="0 0 8 5"><path d="M4 0l4 5H0z" fill="#a0a0a0"/></svg>

<!-- devtools -->
<div class="a" id="dv"></div>
<div class="a" style="left:1516px;top:64px;width:329px;height:53px;background:#f3f3f3"></div>
<div class="l" style="left:1516px;top:64px;width:329px;height:1px;background:#bbb"></div>
<div class="l" style="left:1516px;top:90px;width:329px;height:1px"></div>
<div class="l" style="left:1516px;top:117px;width:329px;height:1px"></div>
<div class="a" style="left:1516px;top:118px;width:329px;height:49px;background:#f3f3f3;border-bottom:1px solid #ccc"></div>
<div class="a" style="left:1548px;top:66px;width:24px;height:22px;background:#ddd;border-radius:2px"></div>
<svg style="left:1525px;top:68px" width="16" height="17" viewBox="0 0 16 17" fill="none"><path d="M6 14H1V2h12v5" stroke="#5a5a5a" stroke-width="1.200"/><path d="M6 6l9 4-4 1 3 4-2 1-3-4-3 3z" fill="#5a5a5a"/></svg>
<svg style="left:1552px;top:68px" width="16" height="18" viewBox="0 0 16 18" fill="none" stroke="#5a5a5a" stroke-width="1.200"><path d="M6 6V1h9v15h-6"/><rect x="1" y="7" width="7" height="9"/></svg>
<div class="l" style="left:1578px;top:69px;width:1px;height:16px"></div>
<span class="d" style="left:1597px;top:71px">Elements</span>
<span class="d" style="left:1668px;top:71px;color:#333">Network</span>
<div class="l" style="left:1656px;top:88px;width:69px;height:2px;background:#03a9f4"></div>
<span class="d" style="left:1733px;top:69px;font-size:14px;color:#444">»</span>
<svg style="left:1806px;top:72px" width="11" height="11" viewBox="0 0 11 11"><circle cx="5.500" cy="5.500" r="5.500" fill="#e03a3a"/><path d="M3.500 3.500l4 4M7.500 3.500l-4 4" stroke="#fff"/></svg>
<span class="d" style="left:1820px;top:71px">2</span>
<svg style="left:1833px;top:71px" width="12" height="12" viewBox="0 0 12 12"><path d="M6 0l6 12H0z" fill="#f2b611"/><path d="M6 4v4M6 9v1.500" stroke="#fff"/></svg>

<svg style="left:1525px;top:97px" width="14" height="14" viewBox="0 0 14 14"><circle cx="7" cy="7" r="6.500" fill="#e00000"/></svg>
<svg style="left:1553px;top:97px" width="14" height="14" viewBox="0 0 14 14" fill="none" stroke="#5a5a5a" stroke-width="1.800"><circle cx="7" cy="7" r="5.500"/><path d="M3 3l8 8"/></svg>
<div class="l" style="left:1578px;top:96px;width:1px;height:16px"></div>
<svg style="left:1591px;top:99px" width="14" height="10" viewBox="0 0 14 10"><rect width="10" height="10" fill="#1a8ce8"/><path d="M10 5l4-4v8z" fill="#1a8ce8"/></svg>
<svg style="left:1618px;top:98px" width="14" height="13" viewBox="0 0 14 13" fill="none" stroke="#e0201c" stroke-width="2"><path d="M1 1h12L8.500 6v6h-3V6z"/></svg>
<svg style="left:1646px;top:98px" width="14" height="14" viewBox="0 0 14 14" fill="none" stroke="#5a5a5a" stroke-width="1.600"><circle cx="5.500" cy="5.500" r="4.500"/><path d="M9 9l4.500 4.500"/></svg>
<div class="l" style="left:1671px;top:96px;width:1px;height:16px"></div>
<span class="d" style="left:1681px;top:98px;color:#666">View:</span>
<svg style="left:1721px;top:99px" width="14" height="10" viewBox="0 0 14 10" fill="#555"><rect width="4" height="2.500"/><rect x="5" width="9" height="2.500"/><rect y="3.800" width="4" height="2.500"/><rect x="5" y="3.800" width="9" height="2.500"/><rect y="7.500" width="4" height="2.500"/><rect x="5" y="7.500" width="9" height="2.500"/></svg>
<svg style="left:1748px;top:99px" width="17" height="11" viewBox="0 0 17 11"><rect width="17" height="2" fill="#b5dcf5"/><rect x="0" y="0" width="6" height="2" fill="#1a8ce8"/><rect x="5" y="4" width="12" height="2" fill="#b5dcf5" opacity=".6"/><rect x="5" y="4" width="6" height="2" fill="#1a8ce8"/><rect x="11" y="8" width="6" height="2" fill="#1a8ce8"/></svg>
<div class="a" style="left:1776px;top:98px;width:11px;height:11px;background:#eee;border:1px solid #bbb;border-radius:2px"></div>
<span class="d" style="left:1794px;top:98px;color:#666">Group by frame</span>

<div class="a" style="left:1520px;top:121px;width:163px;height:18px;background:#fff;padding-left:3px;font-size:12px;line-height:22px;color:#777">Filter</div>
<div class="a" style="left:1696px;top:125px;width:11px;height:11px;background:#eee;border:1px solid #bbb;border-radius:2px"></div>
<span class="d" style="left:1714px;top:124px">Hide data URLs</span>
<span class="d" style="left:1523px;top:149px">All</span>
<div class="l" style="left:1544px;top:146px;width:1px;height:16px"></div>
<div class="a" style="left:1549px;top:144px;width:28px;height:22px;background:#aaa;border-radius:6px;color:#fff;font-size:12px;line-height:23px;text-align:center">XHR</div>
<span class="d" style="left:1584px;top:149px">JS</span>
<span class="d" style="left:1605px;top:149px">CSS</span>
<span class="d" style="left:1635px;top:149px">Img</span>
<span class="d" style="left:1666px;top:149px">Media</span>
<span class="d" style="left:1709px;top:149px">Font</span>
<span class="d" style="left:1743px;top:149px">Doc</span>
<span class="d" style="left:1774px;top:149px">WS</span>
<span class="d" style="left:1802px;top:149px">Manifest</span>

<div class="a" style="left:1570px;top:198px;width:275px;overflow:hidden;font-size:18px;line-height:24px;color:#aaa">Hit F5 to reload and capture filmstrip.</div>
<div class="l" style="left:1516px;top:248px;width:329px;height:1px"></div>
<div class="l" style="left:1516px;top:249px;width:2px;height:18px;background:#999"></div>
<div class="l" style="left:1653px;top:249px;width:1px;height:80px;background:#ddd"></div>
<div class="l" style="left:1790px;top:249px;width:1px;height:80px;background:#ddd"></div>
<span class="d" style="left:1606px;top:255px;color:#444">5000 ms</span>
<span class="d" style="left:1737px;top:255px;color:#444">10000 ms</span>
<div class="l" style="left:1517px;top:273px;width:3px;height:2px;background:#00b4d8"></div>
<div class="l" style="left:1517px;top:276px;width:5px;height:2px;background:#00b4d8"></div>
<div class="l" style="left:1517px;top:279px;width:15px;height:2px;background:#00b4d8"></div>
<div class="l" style="left:1681px;top:279px;width:2px;height:2px;background:#00b4d8"></div>
<div class="l" style="left:1694px;top:282px;width:4px;height:2px;background:#00b4d8"></div>
<div class="l" style="left:1536px;top:269px;width:1px;height:60px;background:#6a6ae0"></div>
<div class="l" style="left:1539px;top:269px;width:1px;height:60px;background:#e05a5a"></div>
<div class="l" style="left:1516px;top:329px;width:329px;height:1px"></div>
<div class="a" style="left:1516px;top:330px;width:329px;height:26px;background:#f3f3f3;border-bottom:1px solid #ccc"></div>
<div class="a" style="left:1517px;top:356px;width:328px;height:21px;background:#f5f5f5"></div>
<div class="a" style="left:1517px;top:398px;width:328px;height:21px;background:#f5f5f5"></div>
<div class="l" style="left:1621px;top:330px;width:1px;height:633px;background:#ddd"></div>
<div class="l" style="left:1655px;top:330px;width:1px;height:633px;background:#ddd"></div>
<div class="l" style="left:1689px;top:330px;width:1px;height:633px;background:#ddd"></div>
<div class="l" style="left:1747px;top:330px;width:1px;height:633px;background:#ddd"></div>
<div class="l" style="left:1780px;top:330px;width:1px;height:633px;background:#ddd"></div>
<div class="l" style="left:1819px;top:330px;width:1px;height:633px;background:#ddd"></div>
<div class="l" style="left:1829px;top:357px;width:1px;height:606px;background:#b0a8ee"></div>
<div class="l" style="left:1830px;top:357px;width:2px;height:606px;background:#f3b3bb"></div>
<span class="d" style="left:1520px;top:337px;color:#333">Name</span><span class="d" style="left:1626px;top:337px;color:#333">St...</span><span class="d" style="left:1660px;top:337px;color:#333">Ty...</span><span class="d" style="left:1694px;top:337px;color:#333">Initiator</span><span class="d" style="left:1752px;top:337px;color:#333">Size</span><span class="d" style="left:1785px;top:337px;color:#333">Time</span><span class="d" style="left:1824px;top:337px;color:#333">Wat</span>

<div class="a" style="left:1522px;top:360px;width:12px;height:14px;background:#fff;border:1px solid #777"></div>
<span class="d" style="left:1539px;top:361px">GetProjectList</span><span class="d" style="left:1626px;top:361px">200</span><span class="d" style="left:1660px;top:361px">xhr</span><span class="d" style="left:1694px;top:361px;color:#333;text-decoration:underline">xhr.js:1…</span><span class="d" style="left:1754px;top:361px">30…</span><span class="d" style="left:1790px;top:361px">31 …</span>
<div class="a" style="left:1522px;top:381px;width:12px;height:14px;background:#fff;border:1px solid #777"></div>
<span class="d" style="left:1539px;top:382px">GetProjectList</span><span class="d" style="left:1626px;top:382px">200</span><span class="d" style="left:1660px;top:382px">xhr</span><span class="d" style="left:1694px;top:382px;color:#888">Other</span><span class="d" style="left:1754px;top:382px">10…</span><span class="d" style="left:1790px;top:382px">26 …</span>
<div class="a" style="left:1522px;top:402px;width:12px;height:14px;background:#fff;border:1px solid #777"></div>
<span class="d" style="left:1539px;top:403px">GetReportList</span><span class="d" style="left:1626px;top:403px">200</span><span class="d" style="left:1660px;top:403px">xhr</span><span class="d" style="left:1694px;top:403px;color:#333;text-decoration:underline">xhr.js:1…</span><span class="d" style="left:1754px;top:403px">30…</span><span class="d" style="left:1790px;top:403px">11 …</span>
<div class="a" style="left:1522px;top:423px;width:12px;height:14px;background:#fff;border:1px solid #777"></div>
<span class="d" style="left:1539px;top:424px">GetReportList</span><span class="d" style="left:1626px;top:424px">200</span><span class="d" style="left:1660px;top:424px">xhr</span><span class="d" style="left:1694px;top:424px;color:#888">Other</span><span class="d" style="left:1754px;top:424px">13…</span><span class="d" style="left:1790px;top:424px">31 …</span>

</body></html>
